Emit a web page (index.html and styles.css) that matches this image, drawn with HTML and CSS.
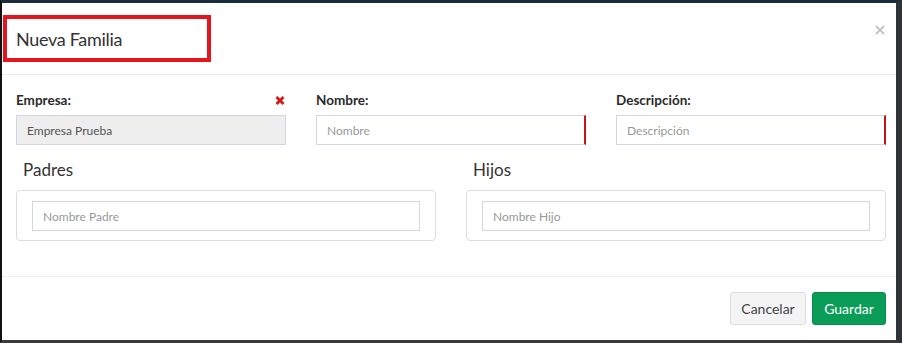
FILE: index.html
```html
<!DOCTYPE html>
<html lang="es">
<head>
<meta charset="utf-8">
<title>Nueva Familia</title>
<link rel="stylesheet" href="styles.css">
</head>
<body>
<div class="backdrop">
  <div class="modal">
    <div class="modal-header">
      <div class="title-box"><h4 class="modal-title">Nueva Familia</h4></div>
      <button class="close" aria-label="Cerrar">
        <svg width="10" height="10" viewBox="0 0 10 10"><path d="M1 1 L9 9 M9 1 L1 9" stroke="#c4c4c4" stroke-width="2" fill="none"/></svg>
      </button>
    </div>
    <div class="modal-body">
      <div class="row3">
        <div class="field">
          <div class="label-row">
            <label>Empresa:</label>
            <svg class="remove" width="10" height="9" viewBox="0 0 10 9"><path d="M1.5 1 L8.5 8 M8.5 1 L1.5 8" stroke="#e01010" stroke-width="2.6" fill="none"/></svg>
          </div>
          <div class="input disabled">Empresa Prueba</div>
        </div>
        <div class="field">
          <div class="label-row"><label>Nombre:</label></div>
          <div class="input required placeholder">Nombre</div>
        </div>
        <div class="field">
          <div class="label-row"><label>Descripción:</label></div>
          <div class="input required placeholder">Descripción</div>
        </div>
      </div>
      <div class="row2">
        <div class="group">
          <h3 class="group-title">Padres</h3>
          <div class="panel"><div class="input placeholder">Nombre Padre</div></div>
        </div>
        <div class="group">
          <h3 class="group-title">Hijos</h3>
          <div class="panel"><div class="input placeholder">Nombre Hijo</div></div>
        </div>
      </div>
    </div>
    <div class="modal-footer">
      <button class="btn btn-default">Cancelar</button>
      <button class="btn btn-success">Guardar</button>
    </div>
  </div>
</div>
</body>
</html>
```

FILE: styles.css
```css
* { box-sizing: border-box; }
html, body { margin: 0; padding: 0; }
body {
  width: 902px;
  height: 343px;
  overflow: hidden;
  background: #333;
  font-family: Lato, "Open Sans", sans-serif;
  color: #333;
}
.backdrop {
  height: 343px;
  border-top: 3px solid #1b2d3d;
  border-left: 2px solid #111;
  border-right: 6px solid #2e3338;
  border-bottom: 3px solid #3a3a3a;
}
.modal {
  position: relative;
  background: #fff;
  height: 337px;
}
.modal-header {
  padding: 12px 0 12px 1px;
  border-bottom: 1px solid #ececec;
}
.title-box {
  width: 208px;
  height: 47px;
  border: 4px solid #e3161f;
  padding-left: 9px;
  display: flex;
  align-items: center;
}
.modal-title {
  margin: 0;
  font-size: 18px;
  font-weight: 400;
  color: #333;
  letter-spacing: -0.3px;
}
.close {
  position: absolute;
  top: 22px;
  right: 11px;
  border: 0;
  background: none;
  padding: 0;
  width: 10px;
  height: 10px;
  display: flex;
}
.modal-body {
  padding: 15px 10px 35px 14px;
}
.row3 {
  display: grid;
  grid-template-columns: 270px 270px 270px;
  column-gap: 30px;
}
.label-row {
  display: flex;
  justify-content: space-between;
  align-items: center;
  height: 20px;
  margin-bottom: 5px;
}
.label-row label {
  font-size: 13.5px;
  font-weight: 700;
  color: #2a2a2a;
}
.remove { margin-right: 1px; }
.input {
  height: 30px;
  border: 1px solid #d2d6de;
  padding: 0 10px;
  display: flex;
  align-items: center;
  font-size: 12px;
  color: #555;
  background: #fff;
}
.input.disabled { background: #eee; }
.input.placeholder { color: #999; }
.input.required { border-right: 2px solid #c7141a; }
.row2 {
  display: grid;
  grid-template-columns: 420px 420px;
  column-gap: 30px;
  margin-top: 13px;
}
.group-title {
  margin: 0 0 8px 7px;
  font-size: 17px;
  font-weight: 400;
  line-height: 24px;
  color: #333;
}
.panel {
  border: 1px solid #ddd;
  border-radius: 4px;
  padding: 10px 15px 9px 15px;
  height: 51px;
}
.panel .input { height: 30px; }
.modal-footer {
  border-top: 1px solid #f0f0f0;
  padding: 15px 10px 15px 0;
  display: flex;
  justify-content: flex-end;
  gap: 6px;
}
.btn {
  font-family: Lato, "Open Sans", sans-serif;
  font-size: 14px;
  height: 33px;
  border-radius: 3px;
  padding: 0 10px;
  cursor: pointer;
}
.btn-default {
  width: 76px;
  background: #f4f4f4;
  border: 1px solid #ddd;
  color: #444;
}
.btn-success {
  width: 74px;
  background: #0a9d57;
  border: 1px solid #088c4c;
  color: #fff;
}
```
